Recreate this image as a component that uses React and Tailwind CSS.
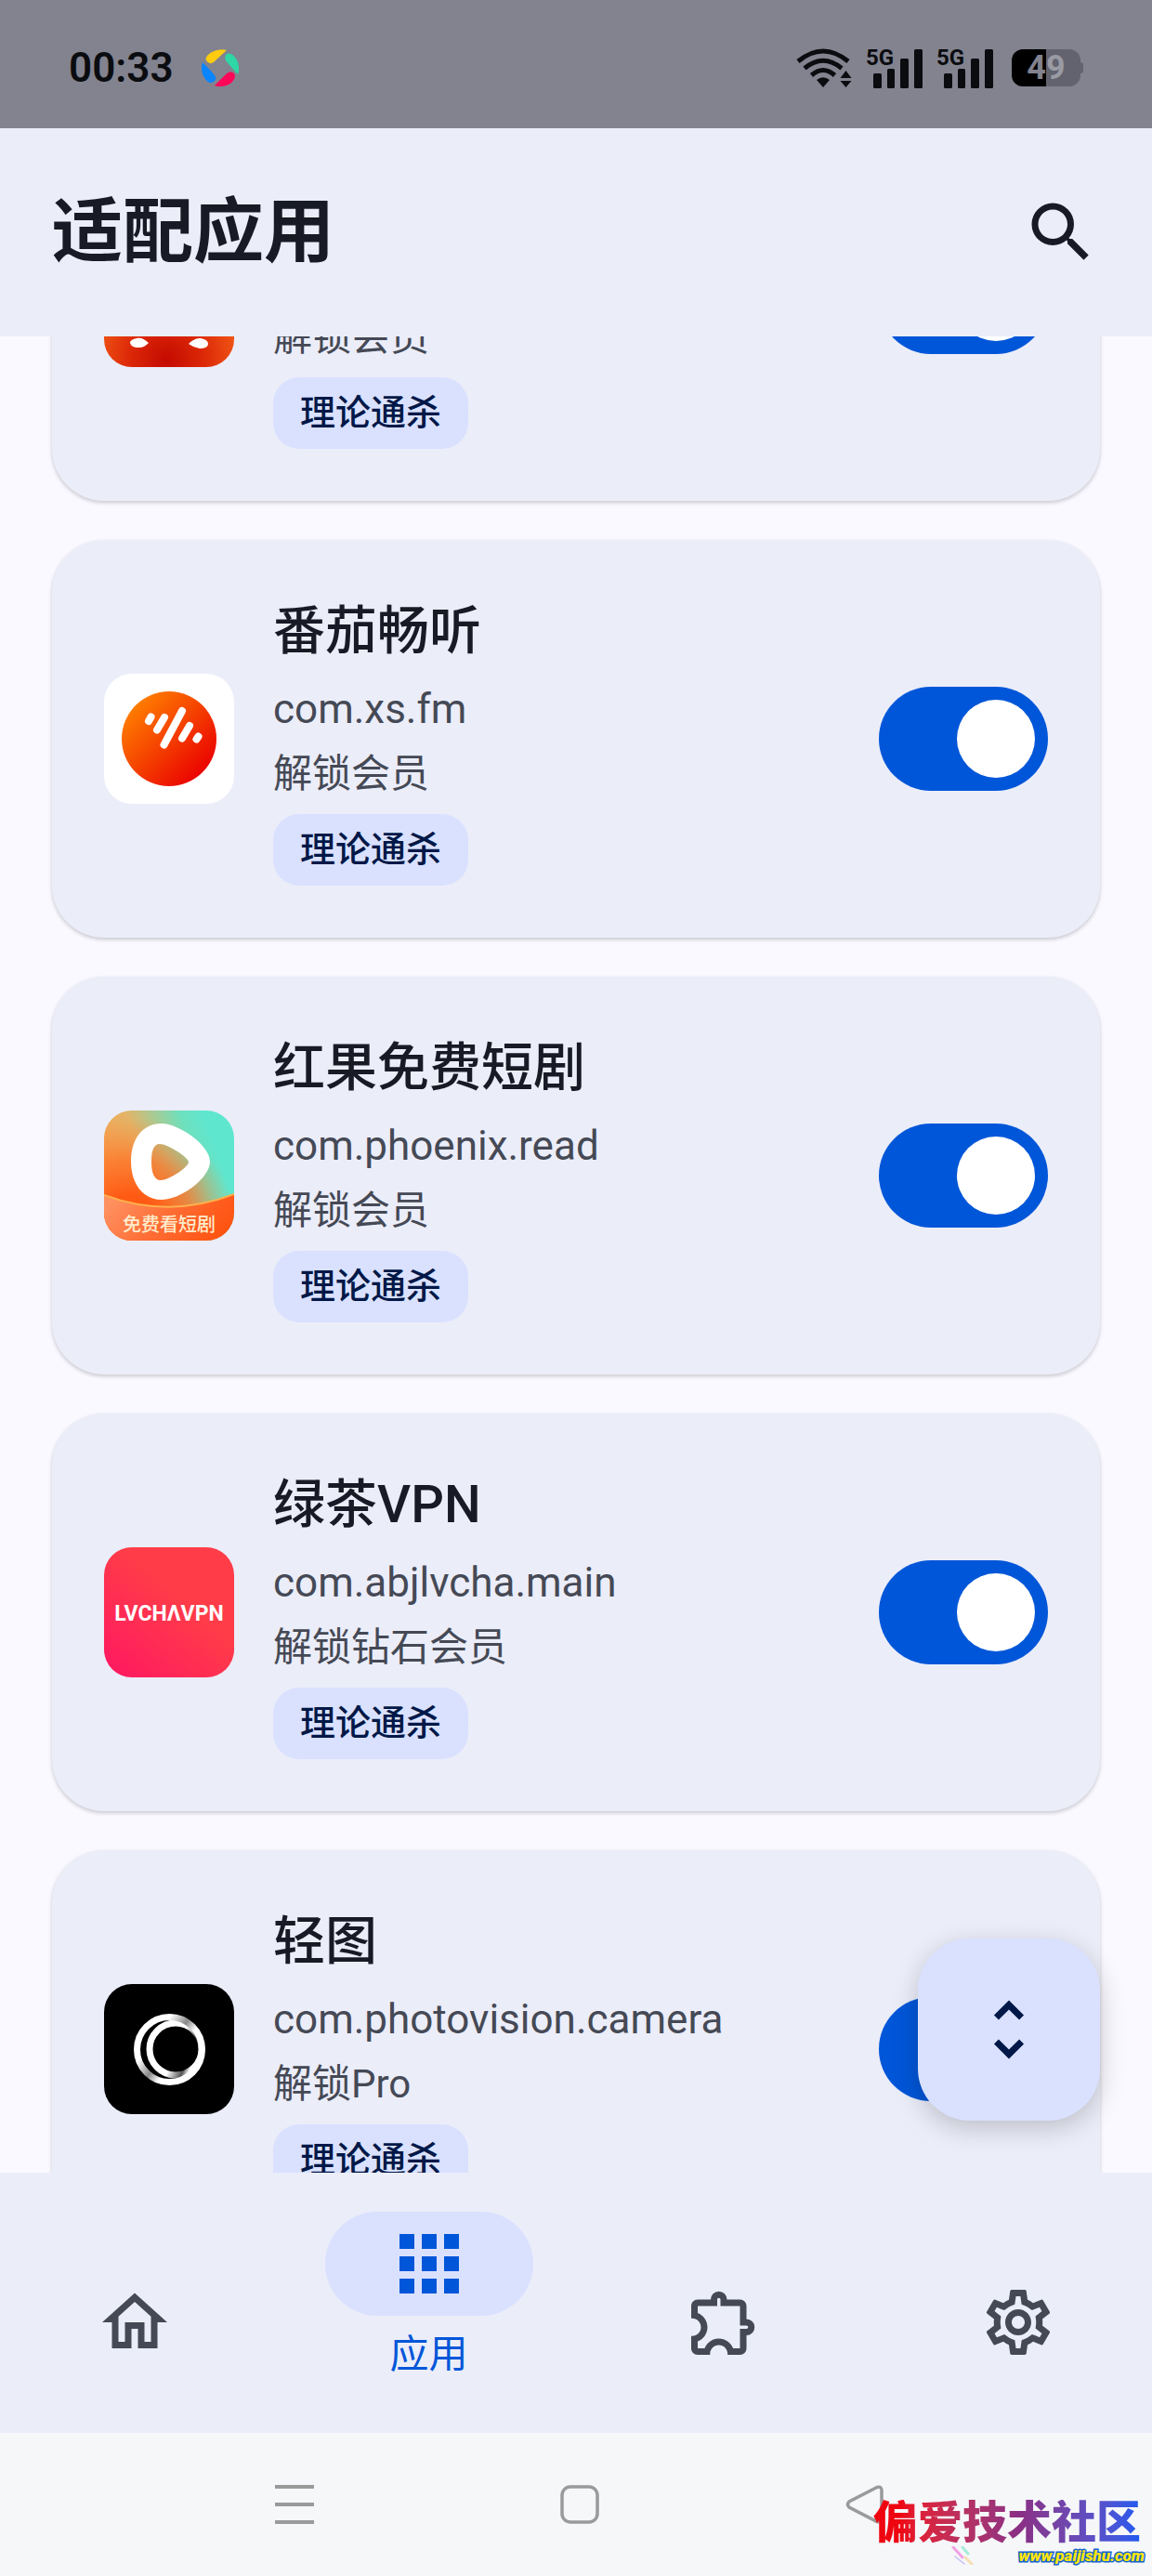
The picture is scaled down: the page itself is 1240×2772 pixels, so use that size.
import React, { useLayoutEffect, useRef, useState } from 'react';
import {
  MdSearch,
  MdUnfoldMore,
  MdOutlineHome,
  MdOutlineExtension,
  MdOutlineSettings,
} from 'react-icons/md';

const NovelIcon = () => (
  <svg viewBox="0 0 140 140" className="size-full" aria-hidden="true">
    <defs>
      <radialGradient id="novel-bg" cx="0.48" cy="0.95" r="0.6">
        <stop offset="0" stopColor="#c40a00" />
        <stop offset="0.5" stopColor="#dd2a08" />
        <stop offset="1" stopColor="#f45d18" />
      </radialGradient>
    </defs>
    <rect width="140" height="140" fill="url(#novel-bg)" />
    <path d="M48 114C43 109 39 108 35 109C30 110 28 112 28 114C29 118 33 119 37 119C42 119 45 117 48 114Z" fill="#fff" />
    <path d="M91 115C96 110 100 109 104 109C109 110 112 112 112 115C112 119 107 120 103 120C98 119 94 117 91 115Z" fill="#fff" />
  </svg>
);

const ListenIcon = () => (
  <svg viewBox="0 0 140 140" className="size-full" aria-hidden="true">
    <defs>
      <linearGradient id="listen-bg" x1="0.1" y1="0.15" x2="0.85" y2="0.9">
        <stop offset="0" stopColor="#ff7f00" />
        <stop offset="1" stopColor="#ea0000" />
      </linearGradient>
    </defs>
    <rect width="140" height="140" fill="#fff" />
    <circle cx="70" cy="70" r="51" fill="url(#listen-bg)" />
    <g stroke="#fff" strokeWidth="8" strokeLinecap="round">
      <path d="M48 51L50.500 46.500" />
      <path d="M57 60.500L65 47" />
      <path d="M64.500 76.500L84 40" />
      <path d="M84 69.500L92 56" />
      <path d="M99.500 70.500L101.500 67.500" />
    </g>
  </svg>
);

const DramaIcon = () => (
  <svg viewBox="0 0 140 140" className="size-full" aria-hidden="true">
    <defs>
      <linearGradient id="drama-bg" x1="0.05" y1="0.55" x2="0.85" y2="0.25">
        <stop offset="0" stopColor="#f5a552" />
        <stop offset="0.35" stopColor="#e3b468" />
        <stop offset="0.8" stopColor="#6ee0bd" />
        <stop offset="1" stopColor="#5fe6cf" />
      </linearGradient>
      <radialGradient id="drama-low" cx="0.2" cy="0.85" r="0.8">
        <stop offset="0.25" stopColor="#ff5a14" />
        <stop offset="0.6" stopColor="#ff6f24" stopOpacity="0.7" />
        <stop offset="1" stopColor="#ff8a3a" stopOpacity="0" />
      </radialGradient>
      <linearGradient id="drama-foot" x1="0" y1="0.3" x2="1" y2="0.6">
        <stop offset="0" stopColor="#ff9161" />
        <stop offset="0.5" stopColor="#ff6c33" />
        <stop offset="1" stopColor="#ff5310" />
      </linearGradient>
    </defs>
    <rect width="140" height="140" fill="url(#drama-bg)" />
    <rect width="140" height="140" fill="url(#drama-low)" />
    <path
      fillRule="evenodd"
      fill="#fff"
      d="M62 14C40 14 29 32 29 55C29 79 42 96 62 96C82 96 114 73 114 55C114 37 80 14 62 14ZM60 36C68 36 91 50 91 55.500C91 61 70 75 61 75C54 75 51 67 51 55.500C51 44 53 36 60 36Z"
    />
    <path d="M0 91Q70 117 140 90V140H0Z" fill="url(#drama-foot)" />
    <path d="M0 91Q70 117 140 90" fill="none" stroke="#ffb04d" strokeWidth="2" />
    <text x="70" y="130" textAnchor="middle" fontSize="20" fontWeight="500" fill="#ffeccd">
      免费看短剧
    </text>
  </svg>
);

const VpnIcon = () => (
  <svg viewBox="0 0 140 140" className="size-full" aria-hidden="true">
    <defs>
      <linearGradient id="vpn-bg" x1="0.1" y1="1" x2="0.6" y2="0.4">
        <stop offset="0" stopColor="#ff1a60" />
        <stop offset="1" stopColor="#ff3c48" />
      </linearGradient>
    </defs>
    <rect width="140" height="140" fill="url(#vpn-bg)" />
    <text x="70" y="79" textAnchor="middle" fontSize="23" fontWeight="700" fill="#fff">
      LVCHΛVPN
    </text>
  </svg>
);

const PhotoIcon = () => (
  <svg viewBox="0 0 140 140" className="size-full" aria-hidden="true">
    <defs>
      <linearGradient id="ring-outer" x1="0.5" y1="0" x2="0.85" y2="0.25">
        <stop offset="0" stopColor="#fff" />
        <stop offset="0.6" stopColor="#888" />
        <stop offset="1" stopColor="#fff" />
      </linearGradient>
      <linearGradient id="ring-inner" x1="0.4" y1="0.8" x2="0.75" y2="0.95">
        <stop offset="0" stopColor="#fff" />
        <stop offset="0.7" stopColor="#555" />
        <stop offset="1" stopColor="#fff" />
      </linearGradient>
    </defs>
    <rect width="140" height="140" fill="#000" />
    <circle cx="77" cy="70" r="28" fill="none" stroke="url(#ring-inner)" strokeWidth="7" />
    <circle cx="70.500" cy="70.500" r="35" fill="none" stroke="url(#ring-outer)" strokeWidth="7" />
  </svg>
);

const apps = [
  { id: 'novel', desc: '解锁会员', tag: '理论通杀', Icon: NovelIcon },
  { id: 'listen', name: '番茄畅听', pkg: 'com.xs.fm', desc: '解锁会员', tag: '理论通杀', Icon: ListenIcon },
  { id: 'drama', name: '红果免费短剧', pkg: 'com.phoenix.read', desc: '解锁会员', tag: '理论通杀', Icon: DramaIcon },
  { id: 'vpn', name: '绿茶VPN', pkg: 'com.abjlvcha.main', desc: '解锁钻石会员', tag: '理论通杀', Icon: VpnIcon },
  { id: 'photo', name: '轻图', pkg: 'com.photovision.camera', desc: '解锁Pro', tag: '理论通杀', Icon: PhotoIcon },
];

const WifiIcon = () => (
  <svg width="60" height="42" viewBox="0 0 60 42" fill="none" aria-hidden="true">
    <g stroke="#0b0c10" strokeWidth="5">
      <path d="M2 14Q29 -8 56 14" />
      <path d="M9 21.500Q29 5 49 21.500" />
      <path d="M16.500 29Q29 18 41.500 29" />
    </g>
    <path d="M22 34Q29 28.500 36 34L29 42Z" fill="#0b0c10" />
    <path d="M53.500 24L59.500 32H47.500Z" fill="#0b0c10" />
    <path d="M47.500 35H59.500L53.500 42Z" fill="#0b0c10" />
  </svg>
);

const SignalIcon = () => (
  <svg width="60" height="44" viewBox="0 0 60 44" fill="#0b0c10" className="overflow-visible" aria-hidden="true">
    <text x="-1" y="19" fontSize="24" fontWeight="700">
      5G
    </text>
    <rect x="7" y="28" width="9" height="16" rx="1.5" />
    <rect x="22" y="23" width="8" height="21" rx="1.5" />
    <rect x="36" y="12" width="9" height="32" rx="1.5" />
    <rect x="51" y="2" width="9" height="42" rx="1.5" />
  </svg>
);

const PinwheelIcon = () => (
  <svg width="40" height="40" viewBox="0 0 40 40" aria-hidden="true">
    <path d="M27 1Q19 -1 11 3Q3 8 5 12Q8 17 13 14Q16 11 27 1Z" fill="#ffcb0f" />
    <path d="M39 27Q42 18 37 10Q32 3 27 5Q24 8 26 12Q28 15 39 27Z" fill="#2fd6a6" />
    <path d="M14 39Q22 42 31 37Q38 31 35 26Q31 22 26 27Q23 30 14 39Z" fill="#ff0758" />
    <path d="M1 14Q-2 24 4 32Q8 38 13 35Q17 32 14 28Q12 25 1 14Z" fill="#0a85ff" />
  </svg>
);

const GridIcon = () => (
  <svg width="64" height="64" viewBox="0 0 64 64" fill="currentColor" aria-hidden="true">
    {[0, 24, 48].map((y) => [0, 24, 48].map((x) => <rect key={`${x}-${y}`} x={x} y={y} width="16" height="16" />))}
  </svg>
);

const StatusBar = () => (
  <div className="flex h-[138px] shrink-0 items-center justify-between bg-[#82838f] px-[74px] pt-2">
    <div className="flex items-center gap-[30px]">
      <span className="text-[44px] leading-none font-semibold text-[#0b0c10]">00:33</span>
      <PinwheelIcon />
    </div>
    <div className="flex items-center gap-4">
      <WifiIcon />
      <SignalIcon />
      <SignalIcon />
      <div className="ml-1 flex items-center">
        <div className="flex h-10 w-[74px] items-center justify-center rounded-xl bg-linear-to-r from-black from-50% to-[#62636e] to-50% text-[36px] leading-none font-bold">
          <span className="text-[#82838f]">4</span>
          <span className="text-[#999aa4]">9</span>
        </div>
        <div className="h-3 w-[3px] rounded-r bg-[#62636e]" />
      </div>
    </div>
  </div>
);

const AppCard = ({ app }) => {
  const [enabled, setEnabled] = useState(true);
  const { id, name, pkg, desc, tag, Icon } = app;

  return (
    <li className="flex min-h-[428px] shrink-0 items-center rounded-[56px] bg-[#ebedf9] p-14 shadow-[0_2px_4px_rgba(0,0,0,0.2)]">
      <div className="size-[140px] shrink-0 overflow-hidden rounded-[30px]">
        <Icon />
      </div>
      <div className="ml-[42px] flex min-w-0 flex-1 flex-col items-start justify-end self-stretch">
        {name && (
          <label htmlFor={id} className="text-[56px] leading-[84px] font-medium text-[#181b25]">
            {name}
          </label>
        )}
        {pkg && <p className="mt-[7px] text-[44px] leading-[70px] text-[#454955]">{pkg}</p>}
        <p className="text-[42px] leading-[70px] text-[#454955]">{desc}</p>
        <span className="mt-2 rounded-[28px] bg-[#dae1ff] px-[29px] text-[38px] leading-[77px] font-medium text-[#001847]">
          {tag}
        </span>
      </div>
      <input
        id={id}
        type="checkbox"
        role="switch"
        aria-label={name || desc}
        checked={enabled}
        onChange={() => setEnabled(!enabled)}
        className="flex h-28 w-[182px] shrink-0 cursor-pointer appearance-none items-center rounded-full bg-[#c5c8d6] p-3.5 before:size-[84px] before:rounded-full before:bg-white before:content-[''] checked:justify-end checked:bg-[#0056d8]"
      />
    </li>
  );
};

const NavItem = ({ href, label, children }) => (
  <a href={href} aria-label={label} className="flex h-full items-center justify-center text-[84px] text-[#454955]">
    {children}
  </a>
);

const BottomNav = () => (
  <nav className="grid h-[280px] shrink-0 grid-cols-4 gap-7 bg-[#ebedf9] pt-[42px]">
    <NavItem href="#home" label="主页">
      <MdOutlineHome />
    </NavItem>
    <a href="#apps" aria-current="page" className="flex flex-col items-center text-[#0056d8]">
      <span className="flex h-28 w-56 items-center justify-center rounded-full bg-[#dae1ff]">
        <GridIcon />
      </span>
      <span className="mt-3.5 text-[42px] leading-[56px]">应用</span>
    </a>
    <NavItem href="#modules" label="模块">
      <MdOutlineExtension />
    </NavItem>
    <NavItem href="#settings" label="设置">
      <MdOutlineSettings />
    </NavItem>
  </nav>
);

const SystemBar = () => (
  <div className="flex h-[154px] shrink-0 items-center justify-between bg-[#f6f7f9] pr-72 pl-[296px]">
    <button type="button" aria-label="最近任务">
      <svg width="42" height="42" viewBox="0 0 42 42" stroke="#9a9a9a" strokeWidth="4">
        <path d="M0 2H42M0 21H42M0 40H42" />
      </svg>
    </button>
    <button type="button" aria-label="桌面">
      <svg width="42" height="42" viewBox="0 0 42 42" fill="none" stroke="#9a9a9a" strokeWidth="3.5">
        <rect x="2" y="2" width="38" height="38" rx="9" />
      </svg>
    </button>
    <button type="button" aria-label="返回">
      <svg width="42" height="42" viewBox="0 0 42 42" fill="none" stroke="#9a9a9a" strokeWidth="3.5">
        <path d="M34 2.500L4 18Q1 21 4 24L34 39.500Q39 41 39 36V6Q39 1 34 2.500Z" />
      </svg>
    </button>
  </div>
);

const Watermark = () => (
  <div className="pointer-events-none absolute right-2 bottom-3 flex flex-col items-end">
    <p className="mr-1 bg-linear-to-r from-[#ee0510] from-10% via-[#8a2f86] via-55% to-[#1a5af0] bg-clip-text text-[48px] leading-[50px] font-black text-transparent">
      偏爱技术社区
    </p>
    <div className="flex items-start gap-12">
      <svg width="24" height="20" viewBox="0 0 24 20" strokeWidth="3" strokeLinecap="round" aria-hidden="true">
        <path d="M2 1L12 12" stroke="#f3a0e6" />
        <path d="M12 1L18 8" stroke="#a5ecd8" />
        <path d="M4 11L14 19" stroke="#c3bdf3" strokeWidth="1.5" />
        <path d="M15 12L22 19" stroke="#f6dfb4" />
      </svg>
      <p className="text-[17px] leading-5 font-black text-[#ffe60a] italic [-webkit-text-stroke:3px_#1463d0] [paint-order:stroke_fill]">
        www.paijishu.com
      </p>
    </div>
  </div>
);

export default function App() {
  const listRef = useRef(null);

  useLayoutEffect(() => {
    listRef.current.scrollTop = 293;
  }, []);

  return (
    <div className="relative flex h-screen flex-col overflow-hidden bg-[#faf9ff] font-[Roboto,'Noto_Sans_CJK_SC',sans-serif]">
      <StatusBar />

      <header className="flex h-56 shrink-0 items-center justify-between bg-[#ebedf9] px-14">
        <h1 className="text-[76px] leading-none font-bold text-[#181b25]">适配应用</h1>
        <button type="button" aria-label="搜索" className="text-[84px] text-[#181b25]">
          <MdSearch />
        </button>
      </header>

      <main className="relative min-h-0 flex-1">
        <ul
          ref={listRef}
          className="flex h-full flex-col gap-[42px] overflow-y-auto px-14 py-[42px] [scrollbar-width:none]"
        >
          {apps.map((app) => (
            <AppCard key={app.id} app={app} />
          ))}
        </ul>
        <button
          type="button"
          aria-label="排序"
          className="absolute right-14 bottom-14 flex size-[196px] items-center justify-center rounded-[56px] bg-[#dae1ff] text-[84px] text-[#001847] shadow-[0_8px_28px_rgba(0,0,0,0.2)]"
        >
          <MdUnfoldMore />
        </button>
      </main>

      <BottomNav />
      <SystemBar />
      <Watermark />
    </div>
  );
}
